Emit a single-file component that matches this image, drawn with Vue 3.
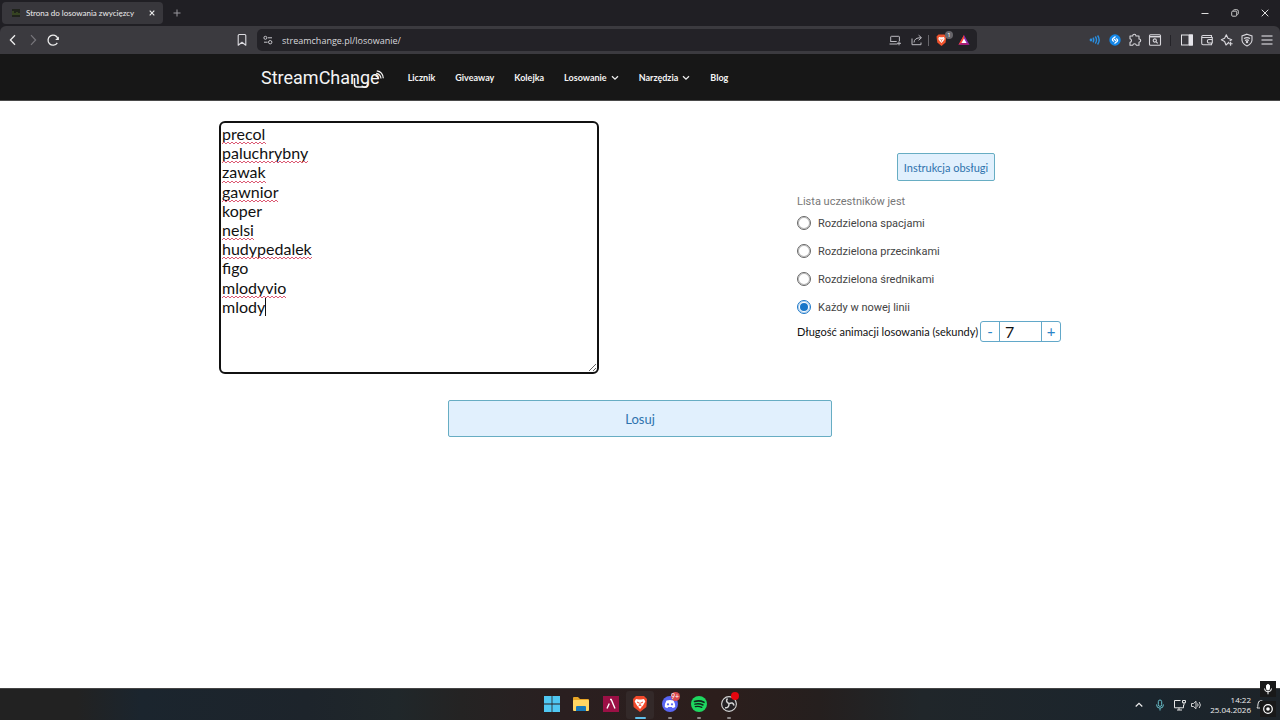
<script setup>
import { ref } from 'vue'

const menu = [
  { label: 'Licznik' },
  { label: 'Giveaway' },
  { label: 'Kolejka' },
  { label: 'Losowanie', sub: true },
  { label: 'Narzędzia', sub: true },
  { label: 'Blog' },
]

const participants = ref(
  ['precol', 'paluchrybny', 'zawak', 'gawnior', 'koper', 'nelsi', 'hudypedalek', 'figo', 'mlodyvio', 'mlody'].join('\n'),
)
// Width of the spelling mark under each line; 0 means the word is fine.
const marks = [44, 87, 44, 56, 0, 32, 90, 0, 65, 0]
const wave = (w) => {
  let d = 'M0 3'
  for (let x = 2, up = true; x <= w; x += 2, up = !up) d += `L${x} ${up ? 1 : 3}`
  return d
}

const options = [
  { value: 'space', label: 'Rozdzielona spacjami' },
  { value: 'comma', label: 'Rozdzielona przecinkami' },
  { value: 'semicolon', label: 'Rozdzielona średnikami' },
  { value: 'line', label: 'Każdy w nowej linii' },
]
const separator = ref('line')
const seconds = ref(7)
</script>

<template>
  <div class="screen">
    <header class="browser">
      <div class="tabs">
        <div class="tab">
          <svg class="favicon" viewBox="0 0 8 8" width="8" height="8"><rect width="8" height="8" fill="#20231c" /><path d="M1 2v4M3 4v2M5 3v3M7 4v2" stroke="#4d6428" /></svg>
          <span class="tab-title">Strona do losowania zwycięzcy</span>
          <button class="icon tab-close" aria-label="Zamknij kartę"><svg viewBox="0 0 8 8" width="8" height="8"><path d="M1.7 1.7l4.6 4.6M6.3 1.7L1.7 6.3" stroke="#eee" stroke-width="1.1" /></svg></button>
        </div>
        <button class="icon new-tab" aria-label="Nowa karta"><svg viewBox="0 0 10 10" width="10" height="10"><path d="M5 1.5v7M1.5 5h7" stroke="#99989d" /></svg></button>
        <div class="window-controls">
          <button class="icon" aria-label="Minimalizuj"><svg viewBox="0 0 10 10" width="10" height="10"><path d="M1.5 5.5h7" stroke="#ddd" /></svg></button>
          <button class="icon" aria-label="Przywróć"><svg viewBox="0 0 10 10" width="10" height="10" fill="none" stroke="#ddd" stroke-width=".9"><rect x="1.7" y="3.2" width="5" height="5" rx="1" /><path d="M3.2 2.6q.2-.9 1.2-.9h2.4q1.5 0 1.5 1.5v2.2q0 1-.9 1.2" /></svg></button>
          <button class="icon" aria-label="Zamknij"><svg viewBox="0 0 10 10" width="10" height="10"><path d="M1.7 1.7l6.6 6.6M8.3 1.7L1.7 8.3" stroke="#ddd" /></svg></button>
        </div>
      </div>

      <div class="toolbar">
        <div class="nav-buttons">
          <button class="icon" aria-label="Wstecz"><svg viewBox="0 0 14 14" width="14" height="14" fill="none" stroke="#eee" stroke-width="1.3"><path d="M9 2.2L4.4 7 9 11.8" /></svg></button>
          <button class="icon" aria-label="Dalej"><svg viewBox="0 0 14 14" width="14" height="14" fill="none" stroke="#77767b" stroke-width="1.2"><path d="M5 2.2L9.6 7 5 11.8" /></svg></button>
          <button class="icon" aria-label="Odśwież"><svg viewBox="0 0 14 14" width="14" height="14" fill="none" stroke="#eee" stroke-width="1.3"><path d="M11.3 9.8A5 5 0 1 1 11.8 5.6" /><path d="M12.9 3.4v3.7H9.2z" fill="#eee" stroke="none" /></svg></button>
        </div>
        <button class="icon bookmark" aria-label="Dodaj zakładkę"><svg viewBox="0 0 14 14" width="14" height="14" fill="none" stroke="#dcdbe0" stroke-width="1.1"><path d="M3.2 2.5q0-1 1-1h5.6q1 0 1 1v9.7L7 9.3l-3.8 2.9z" stroke-linejoin="round" /></svg></button>
        <div class="address">
          <button class="icon" aria-label="Informacje o witrynie"><svg viewBox="0 0 12 12" width="12" height="12" fill="none" stroke="#c9c8cd"><circle cx="3.4" cy="3.8" r="1.5" /><path d="M6 3.8h4M2 8.2h3.6" /><circle cx="8.2" cy="8.2" r="1.7" /></svg></button>
          <input class="url" type="text" value="streamchange.pl/losowanie/" aria-label="Adres strony" />
          <div class="address-tools">
            <button class="icon" aria-label="Zainstaluj"><svg viewBox="0 0 14 14" width="14" height="14" fill="none" stroke="#bbbac0"><path d="M2.7 9V4q0-.7.7-.7h7.3q.7 0 .7.7v4M1.5 11h8M2.7 8.5h6" /><path d="M11 8.3v4M9 10.3h4" /></svg></button>
            <button class="icon" aria-label="Udostępnij"><svg viewBox="0 0 14 14" width="14" height="14" fill="none" stroke="#bbbac0"><path d="M2 5.5v6.2h9V9.5" /><path d="M4 9.5q.2-4.8 7-4.8M8.6 2.2l2.9 2.5-2.9 2.6" /></svg></button>
            <span class="bar"></span>
            <button class="icon shield" aria-label="Osłony Brave, 1 zablokowany">
              <svg viewBox="0 0 14 14" width="14" height="14"><path d="M3.5 1.5h6l1.8 2-.7 6L6.5 13 2.3 9.5l-.8-6z" fill="#f0532d" /><path d="M4 4l1.5.3h2L9 4l.7 2-1.4 2L6.5 10 4.7 8 3.3 6z" fill="#fff" /><path d="M4.7 6l1 .5M8.3 6l-1 .5M6.5 6.5v2" stroke="#f0532d" stroke-width=".7" /></svg>
              <span class="shield-count">1</span>
            </button>
            <button class="icon" aria-label="Brave Rewards"><svg viewBox="0 0 14 14" width="14" height="14"><path d="M7 2l5.5 9.7h-11z" fill="#8c2bb0" /><path d="M7 2L1.5 11.7 4.5 10 7 5.5z" fill="#ff4724" /><path d="M1.5 11.7h11L9.5 10h-5z" fill="#b01a70" /><path d="M7 5.5L9.6 10H4.4z" fill="#fff" /></svg></button>
          </div>
        </div>
        <div class="extensions">
          <button class="icon" aria-label="Głośność"><svg viewBox="0 0 14 14" width="14" height="14" fill="none" stroke="#2a8fe0" stroke-width="1.4"><circle cx="3" cy="7" r=".7" fill="#2a8fe0" /><path d="M5 4.7q1.6 2.3 0 4.6M7.3 3.5q2.4 3.5 0 7M9.6 2.5q3.2 4.5 0 9" /></svg></button>
          <button class="icon" aria-label="Shazam"><svg viewBox="0 0 14 14" width="14" height="14" fill="none" stroke="#fff" stroke-width="1.2" stroke-linecap="round"><circle cx="7" cy="7" r="5.7" fill="#1487e8" stroke="none" /><path d="M5.6 8.2Q3.5 7 5 5.5l2.2-1.7M8.4 5.8Q10.5 7 9 8.5L6.8 10.2M6.3 6.3l1.6 1.4" /></svg></button>
          <button class="icon" aria-label="Rozszerzenia"><svg viewBox="0 0 14 14" width="14" height="14" fill="none" stroke="#d8d7dc" stroke-width="1.1" stroke-linejoin="round"><path d="M2 3h2.7Q4.7 1.3 6.3 1.3T8 3h3v3q1.7 0 1.7 1.5T11 9.2v3H8.3Q8 10.7 6.5 10.7T4.8 12.2H2V9.4q1.5-.2 1.5-1.8T2 5.8z" /></svg></button>
          <button class="icon" aria-label="Szukaj na karcie"><svg viewBox="0 0 14 14" width="14" height="14" fill="none" stroke="#d8d7dc" stroke-width="1.1"><rect x="1.5" y="1.8" width="11" height="10.4" rx="1" /><path d="M1.5 3.7h11" stroke-width="1.5" /><circle cx="6.8" cy="7.5" r="1.6" /><path d="M8 8.7l1.7 1.6" /></svg></button>
          <span class="bar dark"></span>
          <button class="icon" aria-label="Panel boczny"><svg viewBox="0 0 14 14" width="14" height="14" fill="none" stroke="#e6e5ea"><rect x="1.5" y="2" width="11" height="10" /><path d="M9 2h3.5v10H9z" fill="#e6e5ea" /></svg></button>
          <button class="icon" aria-label="Portfel"><svg viewBox="0 0 14 14" width="14" height="14" fill="none" stroke="#d8d7dc" stroke-width="1.1"><path d="M11.5 4.5V2.5H3Q1.7 2.5 1.7 3.7v6.6q0 1.4 1.4 1.4h8.4V10M2 4.5h10.3V10H9Q7.4 10 7.4 8.2T9 6.5h3.3" /></svg></button>
          <button class="icon" aria-label="Leo AI"><svg viewBox="0 0 14 14" width="14" height="14" fill="none" stroke="#d8d7dc" stroke-width="1.1" stroke-linejoin="round"><path d="M9.2 9L6 12 4.6 8.5 1.3 6.8l3.3-1.5L6.3 1.8 8 5.3l3.7 1.5-2 1" /><path d="M10.6 8.7v4M8.6 10.7h4" /></svg></button>
          <button class="icon" aria-label="VPN"><svg viewBox="0 0 14 14" width="14" height="14" fill="none" stroke="#d8d7dc" stroke-width="1.1"><path d="M7 1.2l5 1.7v4.3Q11.5 11 7 13 2.5 11 2 7.2V2.9z" /><path d="M4 5.5q3-1.8 6 0M5 7.4q2-1 4 0" /><circle cx="7" cy="8.9" r=".7" fill="#d8d7dc" /></svg></button>
          <button class="icon" aria-label="Menu"><svg viewBox="0 0 14 14" width="14" height="14" stroke="#b5b4b9" stroke-width="1.4"><path d="M1.5 3h11M1.5 7h11M1.5 11h11" /></svg></button>
        </div>
      </div>
    </header>

    <nav class="site-nav">
      <div class="site-nav-inner">
        <a class="logo" href="#">StreamChange<svg class="logo-art" viewBox="0 0 36 20" width="36" height="20" fill="none" stroke="#f4f4f4"><path d="M3.5 9v6.5q0 2.5 2.5 2.5h8q2.500 0 2.500-2.500V13" stroke-width="1.500" /><path d="M24.500 6.800q2.700.3 3 3.200M25.200 4.300q4.300.6 4.800 5.200M25.800 1.800q6 .8 6.500 7.500" stroke-width="1.200" /></svg></a>
        <a v-for="item in menu" :key="item.label" href="#">{{ item.label }}<svg v-if="item.sub" viewBox="0 0 8 6" width="8" height="6"><path d="M1 1.200l3 3 3-3" fill="none" stroke="#eee" stroke-width="1.300" /></svg></a>
      </div>
    </nav>

    <main class="page">
      <div class="form">
        <div class="editor">
          <textarea v-model="participants" aria-label="Lista uczestników" spellcheck="false"></textarea>
          <div class="marks" aria-hidden="true">
            <div v-for="(w, i) in marks" :key="i" class="mark">
              <svg v-if="w" :width="w" height="4" fill="none" stroke="#dc5a74"><path :d="wave(w)" /></svg>
              <span v-if="i === marks.length - 1" class="caret"></span>
            </div>
          </div>
        </div>

        <div class="settings">
          <button class="btn help">Instrukcja obsługi</button>
          <fieldset>
            <legend>Lista uczestników jest</legend>
            <label v-for="o in options" :key="o.value">
              <input v-model="separator" type="radio" name="separator" :value="o.value" />{{ o.label }}
            </label>
          </fieldset>
          <div class="duration">
            <label for="seconds">Długość animacji losowania (sekundy)</label>
            <div class="stepper">
              <button aria-label="Mniej" @click="seconds--">-</button>
              <input id="seconds" v-model="seconds" type="text" inputmode="numeric" />
              <button aria-label="Więcej" @click="seconds++">+</button>
            </div>
          </div>
        </div>
      </div>
      <button class="btn draw">Losuj</button>
    </main>

    <footer class="taskbar">
      <div class="apps">
        <button class="app" aria-label="Start"><svg viewBox="0 0 18 18" width="18" height="18" fill="#50c8f3"><path d="M1 1h7.600v7.600H1zM9.400 1H17v7.600H9.400zM1 9.400h7.600V17H1zM9.400 9.400H17V17H9.400z" /></svg></button>
        <button class="app" aria-label="Eksplorator plików"><svg viewBox="0 0 18 18" width="18" height="18"><path d="M1 3q0-1 1-1h4l2 2h8q1 0 1 1v3H1z" fill="#e8a526" /><rect x="1" y="5" width="16" height="11" rx="1" fill="#ffd763" /><path d="M4 16v-4q0-1 1-1h8q1 0 1 1v4z" fill="#1779b8" /></svg></button>
        <button class="app" aria-label="Aplikacja"><svg viewBox="0 0 18 18" width="18" height="18"><rect x="1" y="1" width="16" height="16" fill="#9b1045" /><path d="M8 4.500h1.200L13 13.500M7.300 8.500L5 13.500" fill="none" stroke="#fff" stroke-width="1.400" /></svg></button>
        <button class="app active" aria-label="Brave"><svg viewBox="0 0 18 18" width="18" height="18"><path d="M5 1h8l3 3-.6 8L9 17l-6.400-5L2 4z" fill="#f1492b" /><path d="M5 4l3 .6h2L13 4l1.300 2.500L12 10.500 9 14l-3-3.500-2.300-4z" fill="#fff" /><path d="M6 7l2 1M12 7l-2 1M9 7.500V10M7.500 11L9 10l1.500 1" stroke="#f1492b" fill="none" /></svg></button>
        <button class="app running" aria-label="Discord, ponad 9 powiadomień"><svg viewBox="0 0 18 18" width="18" height="18"><circle cx="9" cy="9" r="8" fill="#5865f2" /><path d="M5.500 5.500Q9 4.300 12.500 5.500 14.500 8.800 14.200 12 12.500 13 11.500 13l-.7-1H7.200l-.7 1Q5.500 13 3.800 12 3.500 8.800 5.500 5.500z" fill="#fff" /><circle cx="7" cy="9.300" r="1.100" fill="#5865f2" /><circle cx="11" cy="9.300" r="1.100" fill="#5865f2" /></svg><span class="count">9+</span></button>
        <button class="app running" aria-label="Spotify"><svg viewBox="0 0 18 18" width="18" height="18" fill="none" stroke="#10271a" stroke-linecap="round"><circle cx="9" cy="9" r="8" fill="#1ed760" stroke="none" /><path d="M4.500 6.500q5-1.500 9.500.8" stroke-width="1.600" /><path d="M5 9.200q4-1.200 8 .8" stroke-width="1.400" /><path d="M5.300 11.700q3.500-.9 6.500.7" stroke-width="1.200" /></svg></button>
        <button class="app running" aria-label="OBS Studio, nagrywanie"><svg viewBox="0 0 18 18" width="18" height="18" fill="none" stroke="#d5d5d5"><circle cx="9" cy="9" r="7.400" fill="#242124" stroke-width="1.100" /><path d="M7.500 3.500Q5 6.500 9 8.700M9 8.700q4-2.200 5 1.800M9 8.700q0 4.600-4 4" stroke-width="1.500" /></svg><span class="rec"></span></button>
      </div>
      <div class="tray">
        <button class="icon more" aria-label="Ukryte ikony"><svg viewBox="0 0 12 12" width="12" height="12"><path d="M2.700 7.500L6 4.300l3.300 3.200" fill="none" stroke="#eee" stroke-width="1.200" /></svg></button>
        <button class="icon" aria-label="Mikrofon"><svg viewBox="0 0 12 12" width="12" height="12" fill="none" stroke="#68bfca"><rect x="4.300" y="1" width="3.400" height="6.400" rx="1.700" /><path d="M2.500 5.500q0 3.700 3.500 3.700t3.500-3.700M6 9.200v2.300" /></svg></button>
        <button class="icon" aria-label="Sieć"><svg viewBox="0 0 14 12" width="14" height="12" fill="none" stroke="#e6e6e6"><path d="M7.500 1.500h-6v7.300h9V6M4 11h5M6 8.800V11" /><path d="M9.500 1.500h3v2.300h-3zM11 3.800v2.500" /></svg></button>
        <button class="icon speaker" aria-label="Głośność systemu"><svg viewBox="0 0 12 12" width="12" height="12" fill="none" stroke="#e6e6e6" stroke-width=".9"><path d="M1.500 4.500h2L6 2.300v7.400L3.500 7.500h-2zM7.500 4.500q1.200 1.500 0 3M9.200 3q2.400 3 0 6" /></svg></button>
        <time class="clock" datetime="2026-04-25T14:22"><span>14:22</span><span>25.04.2026</span></time>
        <button class="icon bell" aria-label="Powiadomienia"><svg viewBox="0 0 12 12" width="12" height="12" fill="none" stroke="#ddd"><path d="M2 9q1-1 1-4 0-3.300 3-3.300T9 5q0 3 1 4zM5 11h2" /></svg></button>
      </div>
    </footer>

    <div class="recorder">
      <span><svg viewBox="0 0 16 16" width="16" height="16" fill="none" stroke="#fff"><rect x="6.500" y="3.500" width="3" height="5.500" rx="1.500" fill="#fff" /><path d="M4.500 7.500q0 3.300 3.500 3.300t3.500-3.300M8 10.800v2.500" /></svg></span>
      <span><svg viewBox="0 0 16 16" width="16" height="16" fill="none" stroke="#fff"><circle cx="8" cy="8" r="4.300" stroke-width="1.200" /><circle cx="8" cy="8" r="1.800" fill="#fff" stroke="none" /></svg></span>
    </div>
  </div>
</template>

<style>
body {
  margin: 0;
}
</style>

<style scoped>
.screen {
  position: relative;
  display: flex;
  flex-direction: column;
  min-height: 100vh;
  background: #fff;
  font-family: Lato, "Liberation Sans", sans-serif;
}
.screen * {
  box-sizing: border-box;
}
button,
input,
textarea {
  margin: 0;
  padding: 0;
  border: 0;
  background: none;
  font-family: inherit;
}
a {
  color: inherit;
  text-decoration: none;
}
svg {
  display: block;
}
.icon {
  display: flex;
  align-items: center;
  justify-content: center;
  width: 20px;
  height: 20px;
  flex: none;
}

/* Browser */
.browser {
  background: #201f24;
  color: #eee;
  font-family: "Open Sans", "Noto Sans", sans-serif;
}
.tabs {
  display: flex;
  align-items: center;
  height: 26px;
  padding-left: 2px;
}
.tab {
  display: flex;
  align-items: center;
  width: 161px;
  height: 22px;
  padding: 0 1px 0 10px;
  border-radius: 4px;
  background: #38373c;
}
.tab-title {
  flex: 1;
  margin-left: 6px;
  font-family: Lato, sans-serif;
  font-size: 8px;
  white-space: nowrap;
}
.new-tab {
  margin-left: 4px;
}
.window-controls {
  display: flex;
  margin-left: auto;
}
.window-controls .icon {
  width: 30px;
}
.toolbar {
  display: grid;
  grid-template-columns: 232px 25px minmax(0, 1fr) 303px;
  align-items: center;
  height: 28px;
  border-radius: 6px 6px 0 0;
  background: #3b3a3f;
}
.nav-buttons {
  display: flex;
  padding-left: 3px;
}
.address {
  display: flex;
  align-items: center;
  height: 22px;
  padding: 0 2px 0 1px;
  border-radius: 5px;
  background: #232227;
}
.url {
  flex: 1;
  min-width: 0;
  margin-left: 4px;
  color: #d9d8dd;
  font-size: 9px;
}
.address-tools {
  display: flex;
  align-items: center;
}
.address-tools .icon {
  width: 22px;
}
.bar {
  width: 1px;
  height: 11px;
  background: #66656a;
}
.shield {
  position: relative;
  margin-left: 2px;
}
.shield-count {
  position: absolute;
  top: 1px;
  right: 0;
  width: 8px;
  height: 8px;
  border-radius: 4px;
  background: #66656a;
  color: #fff;
  font-size: 6px;
  line-height: 8px;
  text-align: center;
}
.extensions {
  display: flex;
  align-items: center;
  justify-content: flex-end;
  padding-right: 3px;
}
.bar.dark {
  margin: 0 6px 0 5px;
  background: #242328;
}

/* Site navigation */
.site-nav {
  height: 47px;
  border-bottom: 1px solid #4a4a4a;
  background: #171717;
  color: #f4f4f4;
}
.site-nav-inner {
  display: flex;
  align-items: center;
  gap: 20px;
  max-width: 758px;
  height: 100%;
  margin: 0 auto;
  padding-top: 1px;
  font-size: 9px;
  font-weight: 700;
}
.site-nav-inner a {
  display: flex;
  align-items: center;
  gap: 4px;
}
.site-nav-inner .logo {
  position: relative;
  margin-right: 8px;
  font-family: Roboto, sans-serif;
  font-size: 18px;
  font-weight: 400;
}
.logo-art {
  position: absolute;
  left: 90px;
  top: 2px;
}

/* Draw form */
.page {
  flex: 1;
  padding: 20px 20px 0;
}
.form {
  display: flex;
  justify-content: space-between;
  gap: 24px;
  max-width: 842px;
  margin: 0 auto;
}
.editor {
  position: relative;
  flex: 0 1 380px;
}
.editor textarea {
  display: block;
  width: 100%;
  height: 253px;
  padding: 1px;
  border: 2px solid #111;
  border-radius: 6px;
  outline: 0;
  background: #fff;
  color: #111;
  font-size: 16px;
  line-height: 1.2;
}
.marks {
  position: absolute;
  left: 3px;
  top: 5px;
  font-size: 16px;
  line-height: 1.2;
  pointer-events: none;
}
.mark {
  display: flex;
  align-items: flex-end;
  height: 1.2em;
}
.caret {
  width: 1px;
  height: 18px;
  margin: 0 0 2px 43px;
  background: #111;
}
.settings {
  display: flex;
  flex-direction: column;
  width: 264px;
  padding-top: 32px;
}
.btn {
  border: 1px solid #67adc3;
  border-radius: 2px;
  background: #e1f0fd;
  color: #2f73ad;
}
.help {
  align-self: flex-end;
  width: 98px;
  height: 28px;
  margin-right: 66px;
  font-size: 11px;
}
fieldset {
  display: flex;
  flex-direction: column;
  margin: 13px 0 0;
  padding: 0;
  border: 0;
  font-family: Roboto, sans-serif;
  font-size: 11px;
  color: #444;
}
legend {
  padding: 0;
  line-height: 15px;
  color: #777;
}
fieldset label {
  display: flex;
  align-items: center;
  gap: 7px;
  height: 28px;
}
fieldset input {
  display: grid;
  place-items: center;
  width: 14px;
  height: 14px;
  border: 1px solid #666;
  border-radius: 50%;
  box-shadow: inset 0 0 0 1px #bbb;
  appearance: none;
}
fieldset input:checked {
  border-color: #1976c8;
  box-shadow: inset 0 0 0 1px #b5d3ee;
}
fieldset input:checked::before {
  content: "";
  width: 8px;
  height: 8px;
  border-radius: 50%;
  background: #1976c8;
}
.duration {
  display: flex;
  align-items: center;
  justify-content: space-between;
  font-size: 11px;
  color: #111;
  white-space: nowrap;
}
.stepper {
  display: flex;
  width: 81px;
  height: 21px;
  border: 1px solid #62a8c9;
  border-radius: 3px;
}
.stepper button {
  width: 18px;
  color: #2b84c7;
  font-size: 15px;
  line-height: 19px;
}
.stepper input {
  flex: 1;
  min-width: 0;
  padding-left: 5px;
  border: solid #62a8c9;
  border-width: 0 1px;
  color: #111;
  font-size: 16px;
}
.draw {
  display: block;
  width: 100%;
  max-width: 384px;
  height: 37px;
  margin: 26px auto 0;
  font-size: 13px;
}

/* Taskbar */
.taskbar {
  display: grid;
  grid-template-columns: 1fr 205px 1fr;
  align-items: center;
  height: 32px;
  border-top: 1px solid #444;
  background: linear-gradient(90deg, #222 0%, #222 6%, #1b252e 11%, #1d242b 24%, #20272a 31%, #242323 36%, #2a1f20 44%, #2c1e1c 56%, #251f1e 64%, #20262a 72%, #1b252d 90%, #1d2328 100%);
}
.apps {
  grid-column: 2;
  display: flex;
  justify-content: space-between;
}
.app {
  position: relative;
  display: flex;
  justify-content: center;
  width: 28px;
  height: 28px;
  padding-top: 4px;
  border-radius: 3px;
}
.app.active {
  background: #332929;
}
.app.active::after,
.app.running::after {
  content: "";
  position: absolute;
  bottom: 0;
  width: 4px;
  height: 2px;
  border-radius: 1px;
  background: #8f8a8a;
}
.app.active::after {
  width: 11px;
  background: #60c1ec;
}
.count,
.rec {
  position: absolute;
  top: 1px;
  right: 4px;
  width: 9px;
  height: 9px;
  border-radius: 5px;
  background: #d9494d;
  color: #fff;
  font-size: 7px;
  line-height: 9px;
  text-align: center;
}
.rec {
  width: 8px;
  height: 8px;
  background: #e5060f;
}
.tray {
  display: flex;
  align-items: center;
  justify-content: flex-end;
  padding-right: 9px;
  color: #eee;
}
.tray .more {
  margin-right: 1px;
}
.tray .speaker {
  width: 12px;
}
.clock {
  display: flex;
  flex-direction: column;
  width: 49px;
  font-family: "Open Sans", "Noto Sans", sans-serif;
  font-size: 8px;
  line-height: 10px;
  text-align: right;
}
.tray .bell {
  width: 20px;
}
.recorder {
  position: absolute;
  right: 4px;
  bottom: 3px;
  display: grid;
  gap: 4px;
}
.recorder span {
  background: #191919;
}
</style>
